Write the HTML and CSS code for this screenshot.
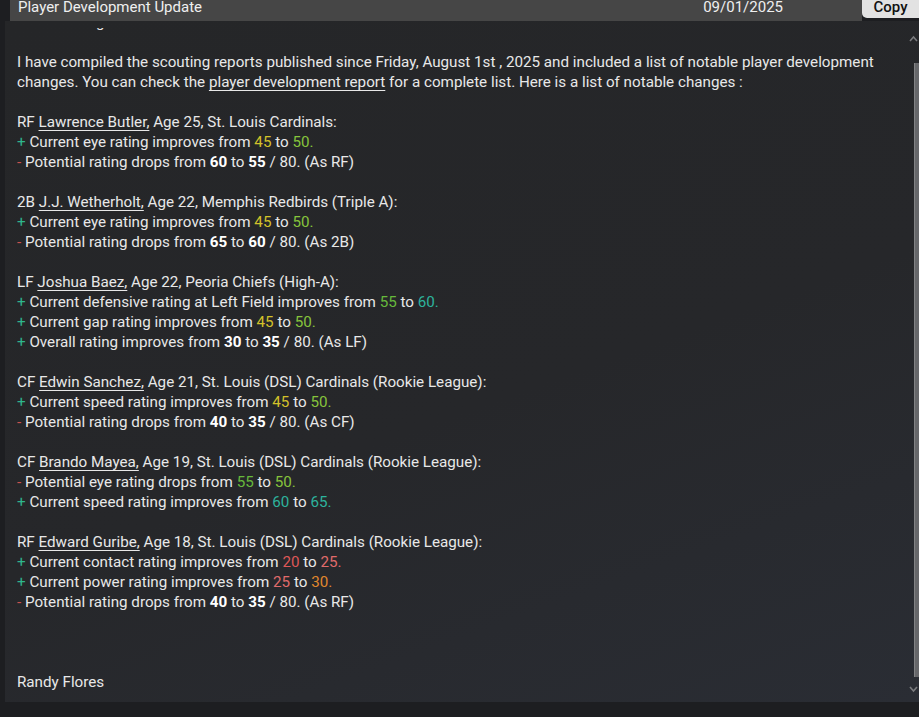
FILE: index.html
```html
<!DOCTYPE html>
<html>
<head>
<meta charset="utf-8">
<link rel="stylesheet" href="styles.css">
</head>
<body>
<div class="app">
  <div class="topbar">
    <div class="titlebar">
      <span class="title">Player Development Update</span>
      <span class="date">09/01/2025</span>
    </div>
    <button class="copy">Copy</button>
  </div>
  <div class="panel">
    <div class="viewport">
      <div class="content">
        <p class="hidden-line">The scouting team met.</p>
        <p>I have compiled the scouting reports published since Friday, August 1st , 2025 and included a list of notable player development changes. You can check the <span class="link">player development report</span> for a complete list. Here is a list of notable changes :</p>
        <p>RF <span class="link">Lawrence Butler,</span> Age 25, St. Louis Cardinals:<br>
        <span class="plus">+</span> Current eye rating improves from <span class="c-yellow">45</span> to <span class="c-lime">50.</span><br>
        <span class="minus">-</span> Potential rating drops from <b>60</b> to <b>55</b> / 80. (As RF)</p>
        <p>2B <span class="link">J.J. Wetherholt,</span> Age 22, Memphis Redbirds (Triple A):<br>
        <span class="plus">+</span> Current eye rating improves from <span class="c-yellow">45</span> to <span class="c-lime">50.</span><br>
        <span class="minus">-</span> Potential rating drops from <b>65</b> to <b>60</b> / 80. (As 2B)</p>
        <p>LF <span class="link">Joshua Baez,</span> Age 22, Peoria Chiefs (High-A):<br>
        <span class="plus">+</span> Current defensive rating at Left Field improves from <span class="c-green">55</span> to <span class="c-teal">60.</span><br>
        <span class="plus">+</span> Current gap rating improves from <span class="c-yellow">45</span> to <span class="c-lime">50.</span><br>
        <span class="plus">+</span> Overall rating improves from <b>30</b> to <b>35</b> / 80. (As LF)</p>
        <p>CF <span class="link">Edwin Sanchez,</span> Age 21, St. Louis (DSL) Cardinals (Rookie League):<br>
        <span class="plus">+</span> Current speed rating improves from <span class="c-yellow">45</span> to <span class="c-lime">50.</span><br>
        <span class="minus">-</span> Potential rating drops from <b>40</b> to <b>35</b> / 80. (As CF)</p>
        <p>CF <span class="link">Brando Mayea,</span> Age 19, St. Louis (DSL) Cardinals (Rookie League):<br>
        <span class="minus">-</span> Potential eye rating drops from <span class="c-green">55</span> to <span class="c-lime">50.</span><br>
        <span class="plus">+</span> Current speed rating improves from <span class="c-teal">60</span> to <span class="c-teal">65.</span></p>
        <p>RF <span class="link">Edward Guribe,</span> Age 18, St. Louis (DSL) Cardinals (Rookie League):<br>
        <span class="plus">+</span> Current contact rating improves from <span class="c-red">20</span> to <span class="c-pink">25.</span><br>
        <span class="plus">+</span> Current power rating improves from <span class="c-pink">25</span> to <span class="c-orange">30.</span><br>
        <span class="minus">-</span> Potential rating drops from <b>40</b> to <b>35</b> / 80. (As RF)</p>
        <p class="signature">Randy Flores</p>
      </div>
    </div>
    <div class="scrollbar">
      <svg class="chev" width="9" height="7" viewBox="0 0 9 7"><path d="M1 6 L4.5 2 L8 6" fill="none" stroke="#7a7b7e" stroke-width="1.6"/></svg>
      <div class="track"><div class="thumb"></div></div>
      <svg class="chev down" width="9" height="7" viewBox="0 0 9 7"><path d="M1 1 L4.5 5 L8 1" fill="none" stroke="#7a7b7e" stroke-width="1.6"/></svg>
    </div>
  </div>
</div>
</body>
</html>
```
FILE: styles.css
```css
html, body {
  margin: 0;
  padding: 0;
}
body {
  width: 919px;
  height: 717px;
  overflow: hidden;
  background: #1d1e21;
  font-family: Roboto, "Liberation Sans", sans-serif;
  color: #e8e8e8;
}
.app {
  display: flex;
  flex-direction: column;
}
.topbar {
  display: flex;
  align-items: flex-start;
  height: 21px;
  padding-left: 10px;
}
.titlebar {
  flex: 1;
  height: 21px;
  background: #464646;
  display: flex;
  justify-content: space-between;
  align-items: center;
  padding: 0 79px 0 8px;
  font-size: 15px;
  line-height: 15px;
  color: #efefef;
}
.title, .date {
  position: relative;
  top: -3px;
}
.copy {
  width: 57px;
  height: 18px;
  border: none;
  margin: 0;
  padding: 0;
  background: #e2e2e2;
  border-radius: 0 0 0 5px;
  font-family: Roboto, "Liberation Sans", sans-serif;
  font-size: 15px;
  font-weight: 500;
  color: #111;
  line-height: 15px;
  display: flex;
  align-items: center;
  justify-content: center;
  padding-bottom: 3px;
}
.panel {
  margin-left: 5px;
  height: 681px;
  display: flex;
  background: linear-gradient(160deg, #252628 0%, #26272a 55%, #2a2d34 100%);
}
.viewport {
  flex: 1;
  margin-top: 7px;
  overflow: hidden;
  padding-left: 12px;
}
.content {
  margin-top: -16px;
  font-size: 15.2px;
  line-height: 20px;
  width: 880px;
}
.content p {
  margin: 0 0 20px 0;
}
.content p.signature {
  margin-top: 60px;
}
.content b {
  color: #ffffff;
  font-weight: 700;
}
.link {
  text-decoration: underline;
  text-underline-offset: 3px;
  text-decoration-thickness: 1px;
}
.plus { color: #2fb58c; }
.minus { color: #c9524e; }
.c-yellow { color: #d3c22a; }
.c-lime { color: #86c43c; }
.c-green { color: #66ba3c; }
.c-teal { color: #2db39d; }
.c-red { color: #de5757; }
.c-pink { color: #e06b6b; }
.c-orange { color: #e0882c; }
.scrollbar {
  width: 10px;
  display: flex;
  flex-direction: column;
  align-items: flex-end;
}
.chev {
  display: block;
  margin-top: 14px;
  margin-right: 1px;
}
.track {
  margin-top: 21px;
  height: 614px;
  width: 5px;
}
.thumb {
  height: 100%;
  background: #66676a;
  border-left: 1px solid #828385;
  box-sizing: border-box;
}
.chev.down {
  margin-top: 9px;
}
```
